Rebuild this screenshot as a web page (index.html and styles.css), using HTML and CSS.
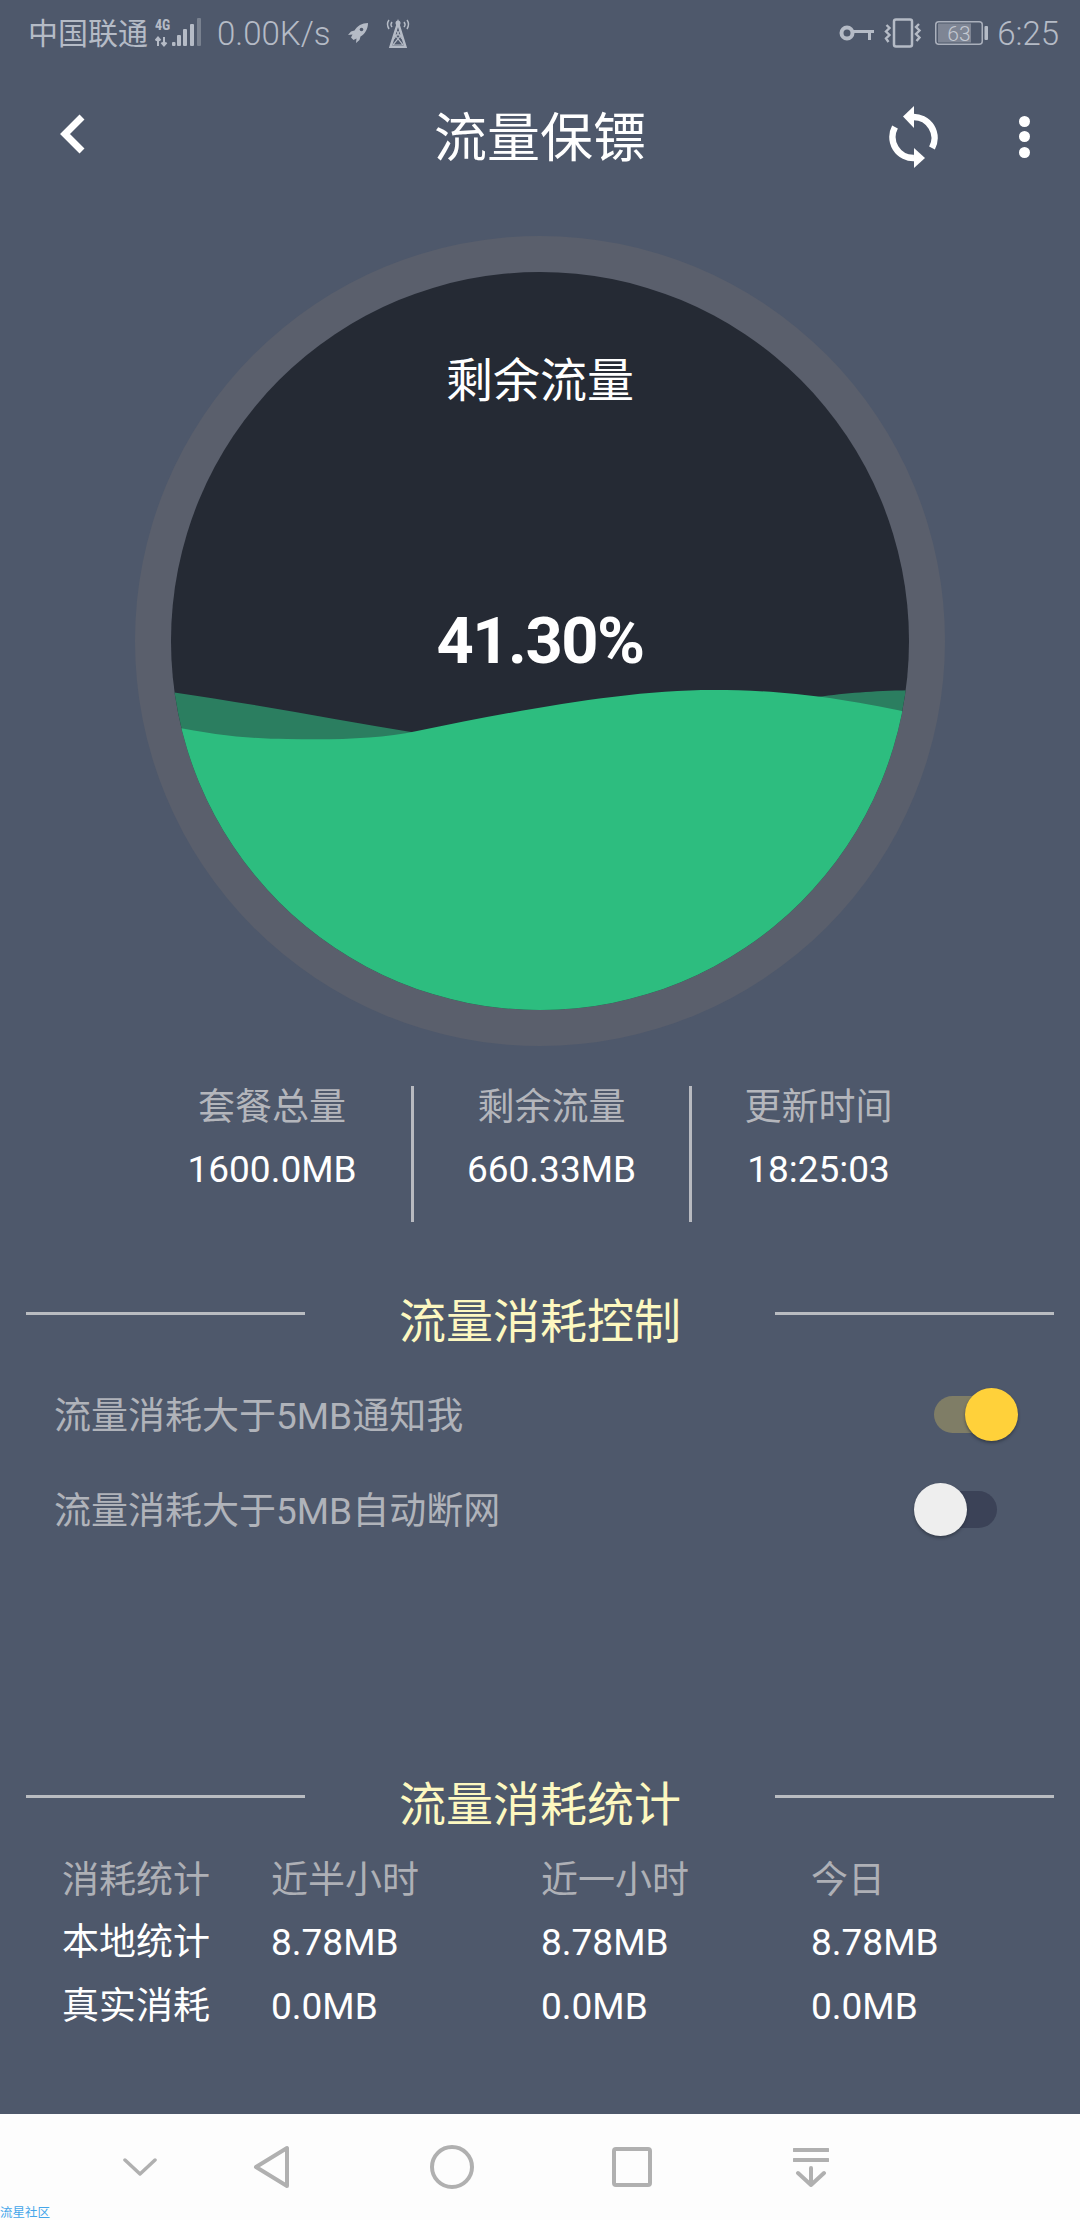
FILE: index.html
```html
<!DOCTYPE html>
<html lang="zh">
<head>
<meta charset="utf-8">
<title>流量保镖</title>
<link rel="stylesheet" href="styles.css">
</head>
<body>
<div class="page">
  <main class="main">
    <div class="status">
      <span class="carrier">中国联通</span>
      <svg class="ic-signal" width="46" height="30" viewBox="0 0 46 30">
        <text x="0" y="12" class="tiny">4G</text>
        <path d="M3 28V20M0.5 22.5L3 19.5L5.5 22.5M9 19V27M6.5 24.5L9 27.5L11.5 24.5" fill="none" stroke="#b5bbc6" stroke-width="2"/>
        <rect x="17" y="24" width="3.5" height="4" rx="1" fill="#b5bbc6"/>
        <rect x="22" y="17" width="4" height="11" rx="1" fill="#b5bbc6"/>
        <rect x="28" y="11" width="4" height="17" rx="1" fill="#b5bbc6"/>
        <rect x="35" y="6" width="4" height="22" rx="1" fill="#b5bbc6"/>
        <rect x="42" y="0" width="4" height="28" rx="1" fill="#79818f"/>
      </svg>
      <span class="speed">0.00K/s</span>
      <svg class="ic-rocket" width="20" height="20" viewBox="0 0 20 20">
        <path d="M20 0C14 0 9 3 6.500 7.500L3 8.500L0 12L4.500 11.500L3 14.500L5.500 17L8.500 15.500L8 20L11.500 17L12.500 13.500C17 11 20 6 20 0Z" fill="#b5bbc6"/>
        <circle cx="13.500" cy="6.500" r="1.800" fill="#4e586b"/>
      </svg>
      <svg class="ic-tower" width="26" height="30" viewBox="0 0 26 30">
        <g fill="none" stroke="#b5bbc6">
          <path d="M4 2Q1 6 4 11M7 4Q5 6.500 7 9M22 2Q25 6 22 11M19 4Q21 6.500 19 9" stroke-width="1.500"/>
          <path d="M13 5L5.500 29H20.500Z" stroke-width="2.500"/>
          <path d="M10 17H16L8 27H18ZM11 12L17 21M15 12L9 21" stroke-width="1.200"/>
        </g>
        <circle cx="13" cy="5" r="2.500" fill="#b5bbc6"/>
      </svg>
      <span class="status-spacer"></span>
      <svg class="ic-key" width="36" height="18" viewBox="0 0 36 18">
        <circle cx="8" cy="9" r="5.500" fill="none" stroke="#b5bbc6" stroke-width="4"/>
        <path d="M14 7.500H35M30.500 7.500V16" fill="none" stroke="#b5bbc6" stroke-width="3"/>
      </svg>
      <svg class="ic-vibrate" width="38" height="30" viewBox="0 0 38 30">
        <rect x="10" y="1.500" width="18" height="27" rx="2" fill="none" stroke="#b5bbc6" stroke-width="2.500"/>
        <path d="M2.500 7L5.500 10L2 13.500L5.500 17L2 20.500L4.500 24M35 6L32 9L35.500 12.500L32 16L35.500 19.500L32.500 23" fill="none" stroke="#b5bbc6" stroke-width="2.400"/>
      </svg>
      <svg class="ic-battery" width="53" height="24" viewBox="0 0 53 24">
        <rect x="3" y="2.500" width="33" height="19" fill="#7e8594"/>
        <rect x="0.750" y="0.750" width="46.500" height="22.500" rx="3" fill="none" stroke="#aab0bc" stroke-width="1.500"/>
        <rect x="49.500" y="5" width="3.500" height="14" rx="1" fill="#b5bbc6"/>
        <text x="24" y="19.500" class="bat">63</text>
      </svg>
      <span class="clock">6:25</span>
    </div>

    <header class="topbar">
      <svg class="ic-back" width="28" height="42" viewBox="0 0 28 42">
        <path d="M23 4L6 21L23 38" fill="none" stroke="#fff" stroke-width="7"/>
      </svg>
      <h1 class="title">流量保镖</h1>
      <svg class="ic-refresh" width="50" height="64" viewBox="0 0 50 64">
        <path d="M24 12A21 21 0 0 1 43 43" fill="none" stroke="#fff" stroke-width="6.500"/>
        <path d="M14 11.500L25 1V23Z" fill="#fff"/>
        <path d="M6 22A21 21 0 0 0 25 53" fill="none" stroke="#fff" stroke-width="6.500"/>
        <path d="M36 53L25 43V63Z" fill="#fff"/>
      </svg>
      <div class="dots"><i></i><i></i><i></i></div>
    </header>

    <section class="gauge">
      <svg class="gauge-art" width="810" height="810" viewBox="0 0 810 810">
        <defs><clipPath id="inner"><circle cx="405" cy="405" r="369"/></clipPath></defs>
        <circle cx="405" cy="405" r="405" fill="#5a5f6c"/>
        <circle cx="405" cy="405" r="369" fill="#252a34"/>
        <g clip-path="url(#inner)">
          <path d="M0 451C100 464 190 482 282 497C400 522 560 482 683 461C720 456 750 454 810 454V810H0Z" fill="#2b7e60"/>
          <path d="M0 482C60 497 110 503 152 503C200 504 245 503 282 495C385 474 490 454 578 454C650 454 715 462 810 485V810H0Z" fill="#2dbd7f"/>
        </g>
      </svg>
      <div class="gauge-label">剩余流量</div>
      <div class="gauge-value">41.30%</div>
    </section>

    <section class="stats">
      <div class="stat">
        <div class="stat-label">套餐总量</div>
        <div class="stat-value">1600.0MB</div>
      </div>
      <div class="stat stat-mid">
        <div class="stat-label">剩余流量</div>
        <div class="stat-value">660.33MB</div>
      </div>
      <div class="stat stat-last">
        <div class="stat-label">更新时间</div>
        <div class="stat-value">18:25:03</div>
      </div>
    </section>

    <div class="sec-head sec-control">
      <span class="rule"></span>
      <h2 class="sec-title">流量消耗控制</h2>
      <span class="rule"></span>
    </div>
    <div class="rows">
      <div class="row">
        <span class="row-text">流量消耗大于5MB通知我</span>
        <span class="switch on"><span class="knob"></span></span>
      </div>
      <div class="row row-off">
        <span class="row-text">流量消耗大于5MB自动断网</span>
        <span class="switch off"><span class="knob"></span></span>
      </div>
    </div>

    <div class="sec-head sec-stats">
      <span class="rule"></span>
      <h2 class="sec-title">流量消耗统计</h2>
      <span class="rule"></span>
    </div>
    <div class="table">
      <div class="cell dim">消耗统计</div><div class="cell dim">近半小时</div><div class="cell dim">近一小时</div><div class="cell dim">今日</div>
      <div class="cell">本地统计</div><div class="cell">8.78MB</div><div class="cell">8.78MB</div><div class="cell">8.78MB</div>
      <div class="cell">真实消耗</div><div class="cell">0.0MB</div><div class="cell">0.0MB</div><div class="cell">0.0MB</div>
    </div>
  </main>

  <nav class="nav">
    <svg class="n1" width="34" height="20" viewBox="0 0 34 20"><path d="M2 3L17 17L32 3" fill="none" stroke="#b0b0b0" stroke-width="3.500" stroke-linecap="round" stroke-linejoin="round"/></svg>
    <svg class="n2" width="37" height="44" viewBox="0 0 37 44"><path d="M34 3V41L3 22Z" fill="none" stroke="#b0b0b0" stroke-width="4" stroke-linejoin="round"/></svg>
    <svg class="n3" width="44" height="44" viewBox="0 0 44 44"><circle cx="22" cy="22" r="20" fill="none" stroke="#b0b0b0" stroke-width="4"/></svg>
    <svg class="n4" width="40" height="40" viewBox="0 0 40 40"><rect x="2" y="2" width="36" height="36" rx="2" fill="none" stroke="#b0b0b0" stroke-width="4"/></svg>
    <svg class="n5" width="36" height="40" viewBox="0 0 36 40"><path d="M1 3H35M1 13H35" fill="none" stroke="#b0b0b0" stroke-width="4" stroke-linecap="round"/><path d="M18 21V38M5 26L18 38L31 26" fill="none" stroke="#b0b0b0" stroke-width="4" stroke-linecap="round" stroke-linejoin="round"/></svg>
  </nav>
  <div class="watermark">流星社区</div>
</div>
</body>
</html>
```
FILE: styles.css
```css
* { box-sizing: border-box; }
html, body { margin: 0; padding: 0; }
body {
  width: 1080px;
  height: 2220px;
  overflow: hidden;
  font-family: Roboto, "Noto Sans CJK SC", sans-serif;
  background: #4e586b;
  color: #fff;
}
.page {
  position: relative;
  width: 1080px;
  height: 2220px;
  display: flex;
  flex-direction: column;
  overflow: hidden;
}
.main { flex: 1; min-height: 0; }

/* status bar */
.status {
  height: 66px;
  padding: 0 21px 0 28px;
  display: flex;
  align-items: center;
  color: #b5bbc6;
}
.carrier { font-size: 30px; line-height: 36px; width: 120px; white-space: nowrap; margin-top: 2px; }
.ic-signal { margin-left: 7px; }
.speed { margin-left: 16px; width: 131px; font-size: 33px; font-weight: 300; white-space: nowrap; }
.ic-tower { margin-left: 17px; }
.status-spacer { flex: 1; }
.ic-vibrate { margin-left: 9px; }
.ic-battery { margin-left: 13px; }
.clock { margin-left: 9px; font-size: 33px; font-weight: 300; }
.tiny { font: 700 14px "Roboto Condensed", Roboto, sans-serif; fill: #b5bbc6; }
.bat { font: 300 21px Roboto, sans-serif; fill: #c3c8d1; text-anchor: middle; }

/* toolbar */
.topbar {
  height: 142px;
  padding: 0 0 0 59px;
  display: flex;
  align-items: center;
}
.ic-back { flex: none; margin-top: -6px; }
.title {
  margin: 3px 0 0 347px;
  width: 212px;
  font-size: 53px;
  line-height: 64px;
  font-weight: 400;
  text-align: center;
  white-space: nowrap;
}
.ic-refresh { flex: none; margin-left: 243px; }
.dots {
  margin-left: 80px;
  display: flex;
  flex-direction: column;
  gap: 4.500px;
  margin-top: -1px;
}
.dots i {
  display: block;
  width: 11px;
  height: 11px;
  border-radius: 50%;
  background: #fff;
}

/* gauge */
.gauge {
  position: relative;
  width: 810px;
  height: 810px;
  margin: 28px 0 0 135px;
  text-align: center;
}
.gauge-art { position: absolute; left: 0; top: 0; }
.gauge-label {
  position: relative;
  padding-top: 115px;
  font-size: 47px;
  line-height: 60px;
}
.gauge-value {
  position: relative;
  margin-top: 195px;
  font-size: 65px;
  line-height: 70px;
  font-weight: 700;
  letter-spacing: -1.500px;
}

/* stats */
.stats {
  margin: 40px 0 0 133px;
  display: flex;
  height: 136px;
}
.stat {
  width: 278px;
  text-align: center;
}
.stat-mid { width: 281px; border-left: 3px solid #b8bac0; border-right: 3px solid #b8bac0; }
.stat-last { width: 253px; }
.stat-label {
  margin-top: 2px;
  font-size: 37px;
  line-height: 40px;
  color: #b4b6bc;
}
.stat-value {
  margin-top: 22px;
  font-size: 37px;
  line-height: 40px;
}

/* section heads */
.sec-head {
  display: flex;
  justify-content: space-between;
  height: 70px;
  padding: 0 26px;
  align-items: center;
}
.sec-control { margin-top: 63px; }
.sec-stats { margin-top: 209px; }
.rule {
  flex: none;
  width: 279px;
  height: 3px;
  margin-bottom: 14px;
  background: #b9bcc1;
}
.sec-title {
  margin: 4px 0 0;
  font-size: 47px;
  line-height: 60px;
  font-weight: 400;
  color: #fdf8c0;
}

/* switches */
.rows { padding-top: 14px; }
.row {
  height: 95px;
  padding: 0 74px 0 54px;
  display: flex;
  align-items: center;
  justify-content: space-between;
}
.row-off { padding-right: 83px; }
.row-text { font-size: 37px; color: #b0b3ba; margin-top: -8px; }
.switch {
  position: relative;
  display: block;
  width: 72px;
  height: 37px;
  margin-top: -4px;
  border-radius: 19px;
}
.switch.on { background: #7f7d66; }
.switch.off { background: #3b4257; }
.knob {
  position: absolute;
  top: -8px;
  width: 53px;
  height: 53px;
  border-radius: 50%;
  box-shadow: 0 2px 3px rgba(30, 35, 45, .5);
}
.on .knob { left: 31px; background: #ffd13a; }
.off .knob { left: -11px; background: #eeeeee; }

/* table */
.table {
  margin-top: 8px;
  padding-left: 62px;
  display: grid;
  grid-template-columns: 209px 270px 270px auto;
  grid-auto-rows: 64.500px;
  align-items: center;
}
.cell { font-size: 37px; line-height: 44px; white-space: nowrap; }
.dim { color: #aeb0b6; margin-top: 5px; }

/* nav bar */
.nav {
  flex: none;
  height: 106px;
  padding-left: 123px;
  background: #fdfdfd;
  display: flex;
  align-items: center;
}
.nav svg { flex: none; }
.n1 { margin-right: 96px; }
.n2 { margin-right: 140px; }
.n3 { margin-right: 138px; }
.n4 { margin-right: 141px; }

.watermark {
  position: absolute;
  left: 0;
  top: 2205px;
  font-size: 12.500px;
  line-height: 16px;
  color: #45a6ea;
  white-space: nowrap;
}
```
